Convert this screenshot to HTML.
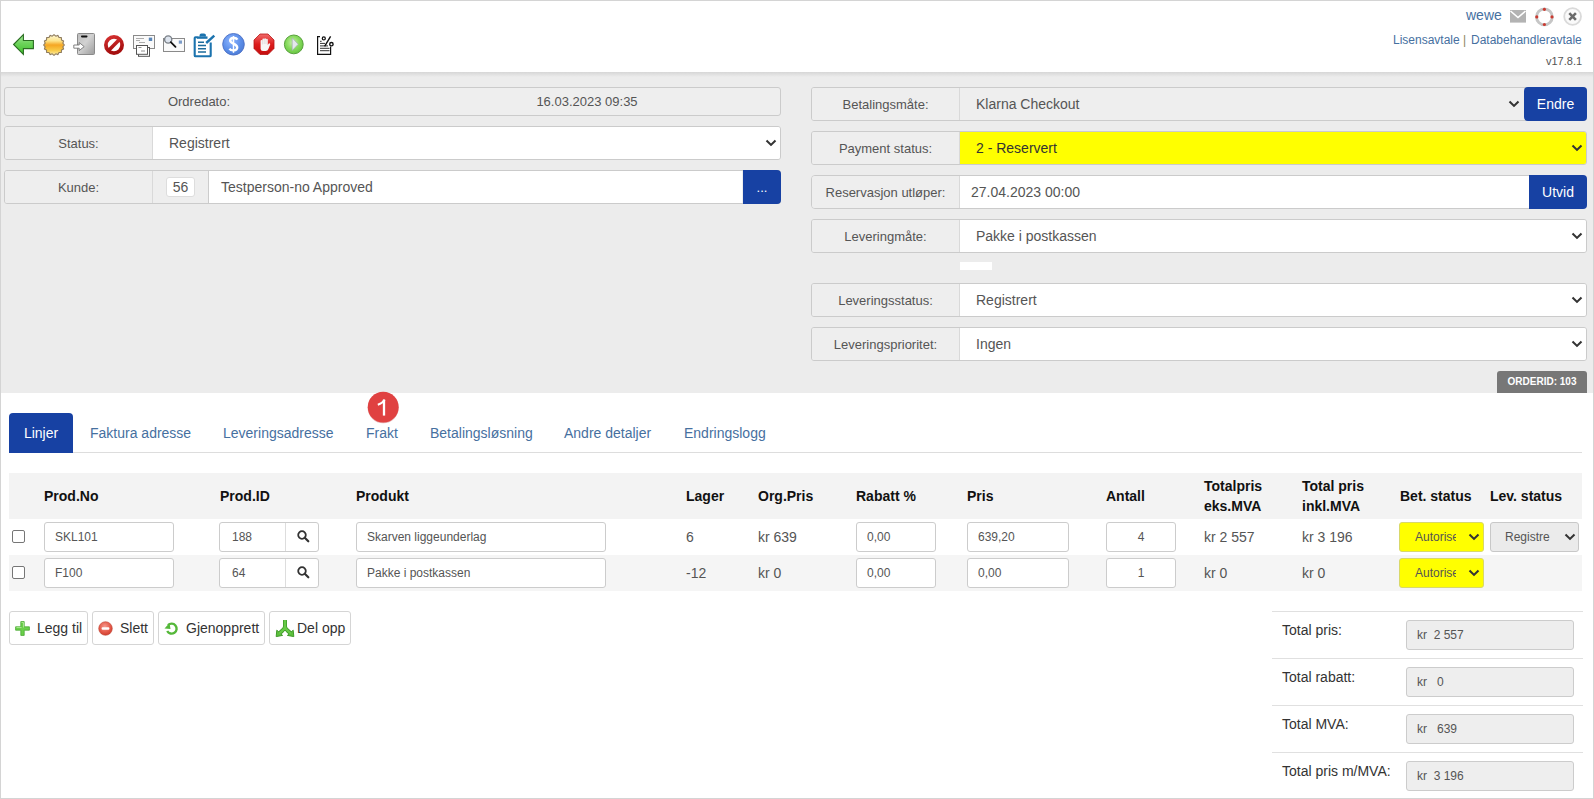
<!DOCTYPE html>
<html><head><meta charset="utf-8">
<style>
*{box-sizing:border-box;margin:0;padding:0}
html,body{width:1594px;height:799px;overflow:hidden;background:#fff}
body{font-family:"Liberation Sans",sans-serif;position:relative;color:#555}
.a{position:absolute}
#frame{left:0;top:0;width:1594px;height:799px;border:1px solid #d4d4d4;z-index:50;pointer-events:none}
#hdr{left:1px;top:1px;width:1592px;height:71px;background:#fff}
#grey{left:1px;top:72px;width:1592px;height:321px;background:#ececec}
#shadow{left:1px;top:72px;width:1592px;height:5px;background:linear-gradient(#d6d6d6,#ececec)}
.box{position:absolute;border:1px solid #cbcbcb;border-radius:3px;background:#eee;overflow:hidden}
.lbl{position:absolute;left:0;top:0;bottom:0;width:148px;background:#eee;border-right:1px solid #d9d9d9;font-size:13px;color:#555;text-align:center;padding-top:9px;line-height:16px}
.lt{font-size:13px;text-align:center;line-height:16px}
.val{position:absolute;top:0;bottom:0;right:0;background:#fff;font-size:14px;color:#555;line-height:32px}
.chev{position:absolute;width:7px;height:7px;border-right:2px solid #444;border-bottom:2px solid #444;transform:rotate(45deg)}
.btn{position:absolute;background:#1741a3;color:#fff;border-radius:4px;text-align:center}
.tab{top:425px;font-size:14px;line-height:16px;color:#46709f;white-space:nowrap}
.th{top:488px;font-size:14px;font-weight:bold;color:#111;line-height:16px;white-space:nowrap}
.th2{top:476px;font-size:14px;font-weight:bold;color:#111;line-height:20px;white-space:nowrap}
.inp{height:30px;background:#fff;border:1px solid #ccc;border-radius:3px;font-size:12px;line-height:28px;padding-left:10px;color:#555;white-space:nowrap;overflow:hidden}
.td{font-size:14px;line-height:30px;color:#555;white-space:nowrap}
.cb{width:13px;height:13px;border:1px solid #767676;border-radius:2px;background:#fff}
.ysel{width:85px;height:30px;background:#ffff00;border:1px solid #d8d86a;border-radius:3px;font-size:12px;line-height:28px;color:#555}
.gsel{width:89px;height:30px;background:#ebebeb;border:1px solid #c8c8c8;border-radius:3px;font-size:12px;line-height:28px;color:#555}
.sbtn{top:611px;height:34px;border:1px solid #d5d5d5;border-radius:3px;background:#fff;font-size:14px;line-height:32px;color:#333}
.tline{left:1272px;width:311px;height:1px;background:#e0e0e0}
.tlbl{left:1282px;font-size:14px;line-height:16px;color:#333}
.tinp{left:1406px;width:168px;height:30px;background:#eee;border:1px solid #ccc;border-radius:3px;font-size:12px;line-height:28px;padding-left:10px;color:#555;white-space:nowrap}
</style></head><body>
<div id="frame" class="a"></div>
<div id="hdr" class="a"></div>
<div id="grey" class="a"></div>
<div id="shadow" class="a"></div>

<!-- header icons -->
<svg class="a" style="left:0;top:0" width="345" height="70" viewBox="0 0 345 70">
 <defs>
  <linearGradient id="gArr" x1="0" y1="0" x2="0" y2="1"><stop offset="0" stop-color="#a6e89c"/><stop offset="0.45" stop-color="#6cd35a"/><stop offset="1" stop-color="#3fc12c"/></linearGradient>
  <linearGradient id="gSun" x1="0" y1="0" x2="0" y2="1"><stop offset="0" stop-color="#fff8d8"/><stop offset="0.3" stop-color="#fde48a"/><stop offset="0.5" stop-color="#f5a623"/><stop offset="0.75" stop-color="#f8c945"/><stop offset="1" stop-color="#fdf0b0"/></linearGradient>
  <linearGradient id="gDoor" x1="0" y1="0" x2="1" y2="1"><stop offset="0" stop-color="#bdbdbd"/><stop offset="0.45" stop-color="#d2d2d2"/><stop offset="1" stop-color="#9c9c9c"/></linearGradient>
  <radialGradient id="gDol" cx="0.4" cy="0.35" r="0.75"><stop offset="0" stop-color="#8fb6ff"/><stop offset="0.6" stop-color="#5a8de8"/><stop offset="1" stop-color="#4a78d0"/></radialGradient>
  <linearGradient id="gStop" x1="0" y1="0" x2="0" y2="1"><stop offset="0" stop-color="#f06a6a"/><stop offset="0.5" stop-color="#dd1c1c"/><stop offset="1" stop-color="#c40d0d"/></linearGradient>
  <radialGradient id="gPlay" cx="0.45" cy="0.4" r="0.7"><stop offset="0" stop-color="#c8f0a8"/><stop offset="0.5" stop-color="#86da5c"/><stop offset="1" stop-color="#5cbf3a"/></radialGradient>
  <linearGradient id="gNo" x1="0" y1="0" x2="0.3" y2="1" gradientUnits="objectBoundingBox"><stop offset="0" stop-color="#d43030"/><stop offset="1" stop-color="#a50f0f"/></linearGradient>
 </defs>
 <!-- arrow -->
 <path d="M13.6 44.5 L23.4 34.7 L23.4 40.5 L33.4 40.5 L33.4 48.6 L23.4 48.6 L23.4 54.3 Z" fill="url(#gArr)" stroke="#2b6d22" stroke-width="1.1" stroke-linejoin="miter"/>
 <!-- sun seal -->
 <path id="sunp" fill="url(#gSun)" stroke="#8f7c5e" stroke-width="1.1" stroke-linejoin="round" d="M54.00 34.60 L55.76 36.17 L57.98 35.39 L59.00 37.52 L61.35 37.65 L61.48 40.00 L63.61 41.02 L62.83 43.24 L64.40 45.00 L62.83 46.76 L63.61 48.98 L61.48 50.00 L61.35 52.35 L59.00 52.48 L57.98 54.61 L55.76 53.83 L54.00 55.40 L52.24 53.83 L50.02 54.61 L49.00 52.48 L46.65 52.35 L46.52 50.00 L44.39 48.98 L45.17 46.76 L43.60 45.00 L45.17 43.24 L44.39 41.02 L46.52 40.00 L46.65 37.65 L49.00 37.52 L50.02 35.39 L52.24 36.17 Z"/>
 <!-- door -->
 <rect x="77.5" y="33.5" width="17" height="21" rx="1" fill="url(#gDoor)" stroke="#8a8a8a" stroke-width="1"/>
 <rect x="81" y="35.6" width="6.5" height="1.8" rx="0.8" fill="#111"/>
 <path d="M73.8 45 L79.2 45 L79.2 42.6 L84.2 46.6 L79.2 50.6 L79.2 48.2 L73.8 48.2 Z" fill="#fff" stroke="#666" stroke-width="0.8"/>
 <!-- no sign -->
 <circle cx="114" cy="45" r="8.1" fill="none" stroke="url(#gNo)" stroke-width="3.8"/>
 <path d="M108.3 50.7 L119.7 39.3" stroke="url(#gNo)" stroke-width="3.6"/>
 <!-- mail docs -->
 <rect x="133.5" y="35.5" width="21" height="13" fill="#fafafa" stroke="#8a8a8a" stroke-width="1"/>
 <rect x="148.8" y="37.6" width="3.4" height="3.4" fill="#5a86b8"/>
 <path d="M136 38.5 h8 M136 40.5 h4 M139 42.5 h6" stroke="#999" stroke-width="0.8"/>
 <rect x="138.5" y="47.5" width="11" height="8.8" fill="#fff" stroke="#555" stroke-width="1"/>
 <rect x="136.5" y="45.5" width="11" height="8.8" fill="#fff" stroke="#555" stroke-width="1"/>
 <path d="M138.5 47.5 h3 M141 51 h4" stroke="#777" stroke-width="0.8"/>
 <!-- magnifier mail -->
 <rect x="163.5" y="38.5" width="21" height="13" fill="#fafafa" stroke="#8a8a8a" stroke-width="1"/>
 <rect x="178.8" y="40.5" width="3.2" height="3.2" fill="#7c9cc8"/>
 <circle cx="168.2" cy="39.5" r="3.6" fill="#dde4ee" stroke="#7a8088" stroke-width="1.4"/>
 <path d="M170.8 42.2 L175.5 46.8" stroke="#111" stroke-width="1.8" stroke-linecap="round"/>
  <!-- clipboard -->
 <path d="M197.5 37.2 h-2 a0.8 0.8 0 0 0 -0.8 0.8 v17.4 a0.8 0.8 0 0 0 0.8 0.8 h14.4 a0.8 0.8 0 0 0 0.8 -0.8 v-13" fill="none" stroke="#1b73ae" stroke-width="2.1"/>
 <path d="M197 37.6 h10.5" fill="none" stroke="#1b73ae" stroke-width="2.4"/>
 <path d="M200.2 36.6 v-1.2 a1.2 1.2 0 0 1 1.2 -1.2 h2.6 a1.2 1.2 0 0 1 1.2 1.2 v1.2" fill="#1b73ae" stroke="#1b73ae" stroke-width="1.4"/>
 <path d="M198 42.3 h6 M198 45.6 h8 M198 48.8 h8 M198 52.1 h8" stroke="#1d6c9c" stroke-width="1.5"/>
 <path d="M206.2 43 L214.3 35.6" stroke="#1b73ae" stroke-width="2.4"/>
 <!-- dollar -->
 <circle cx="233.5" cy="44.3" r="10.8" fill="url(#gDol)" stroke="#4c6fc4" stroke-width="0.9"/>
 <path d="M237.4 39.6 C236.2 37.4 230 37.2 230.2 40.8 C230.4 43.8 237.2 43.6 237.2 47.5 C237.2 51 231 51.2 229.5 48.6" fill="none" stroke="#fff" stroke-width="2.4"/>
 <path d="M233.5 36 V52.8" stroke="#fff" stroke-width="1.5"/>
 <!-- stop -->
 <path d="M260 34 L268 34 L274 40 L274 48.5 L268 54.5 L260 54.5 L254 48.5 L254 40 Z" fill="url(#gStop)" stroke="#b81616" stroke-width="0.8"/>
 <path d="M260.6 41 a0.9 0.9 0 0 1 1.8 0 v-1.6 a0.9 0.9 0 0 1 1.8 0 v-0.3 a0.9 0.9 0 0 1 1.8 0 v0.6 a0.9 0.9 0 0 1 1.8 0 v5.2 l0.9 -1.3 a0.9 0.9 0 0 1 1.5 0.9 l-1.8 4.6 a3 3 0 0 1 -2.8 2 h-2.6 a2.4 2.4 0 0 1 -2.4 -2.4 Z" fill="#f8f6f6"/>
 <path d="M262.4 41 v3.4 M264.2 39.4 v4.6 M266 39.6 v4.4" stroke="#cfc6c6" stroke-width="0.5"/>
 <!-- play -->
 <circle cx="293.8" cy="44.4" r="9.4" fill="url(#gPlay)" stroke="#58a03c" stroke-width="1"/>
 <path d="M292.2 37.8 L298.2 44.3 L292.2 50.6 Z" fill="#e4e8ec" stroke="#9aa4ae" stroke-width="0.6"/>
 <!-- percent doc -->
 <path d="M320 36.6 h-2.4 v17.8 h13 v-8" fill="none" stroke="#111" stroke-width="1.2"/>
 <path d="M320 41.3 h1.6 M320 43.4 h5 M320 45.9 h8 M320 48.3 h9.5 M320 50.7 h9.5" stroke="#1a1a1a" stroke-width="0.9"/>
 <circle cx="323.8" cy="38.4" r="1.5" fill="none" stroke="#111" stroke-width="1.3"/>
 <circle cx="331.4" cy="44.2" r="1.7" fill="#fff" stroke="#111" stroke-width="1.4"/>
 <path d="M330.6 36.3 L324.6 46.3" stroke="#111" stroke-width="1.4"/>
</svg>

<!-- top right -->
<div class="a" style="left:1466px;top:7px;font-size:14px;line-height:16px;color:#46709f">wewe</div>
<svg class="a" style="left:1505px;top:5px" width="80" height="24" viewBox="1505 5 80 24">
 <rect x="1510" y="10" width="16" height="12.6" fill="#b3b3b3"/>
 <path d="M1510.5 11 L1518 17.5 L1525.5 11" fill="none" stroke="#fff" stroke-width="1.6"/>
 <circle cx="1544.4" cy="16.9" r="7.9" fill="none" stroke="#c6c6c6" stroke-width="2.8"/>
 <circle cx="1544.4" cy="9.3" r="1.6" fill="#c93a30"/><circle cx="1544.4" cy="24.5" r="1.6" fill="#c93a30"/>
 <circle cx="1536.8" cy="16.9" r="1.6" fill="#c93a30"/><circle cx="1552" cy="16.9" r="1.6" fill="#c93a30"/>
 <circle cx="1572.6" cy="16.5" r="8.4" fill="#fafafa" stroke="#dadada" stroke-width="1.8"/>
 <path d="M1569.3 13.2 L1575.9 19.8 M1575.9 13.2 L1569.3 19.8" stroke="#6a6a6a" stroke-width="2.6"/>
</svg>
<div class="a" style="left:1393px;top:33px;font-size:12px;line-height:14px;color:#46709f;white-space:nowrap">Lisensavtale <span style="color:#8a8660">|</span> <span style="margin-left:1.5px">Databehandleravtale</span></div>
<div class="a" style="left:1546px;top:55px;font-size:11px;line-height:12px;color:#555">v17.8.1</div>

<!-- left column -->
<div class="box" style="left:4px;top:87px;width:777px;height:29px">
  <div class="a lt" style="left:0;width:388px;top:6px">Ordredato:</div>
  <div class="a lt" style="left:388px;width:388px;top:6px">16.03.2023 09:35</div>
</div>
<div class="box" style="left:4px;top:126px;width:777px;height:34px">
  <div class="lbl">Status:</div>
  <div class="val" style="left:148px;padding-left:16px">Registrert<svg class="a" style="right:3px;top:12px" width="12" height="8" viewBox="0 0 12 8"><path d="M1.5 1.5 L6 5.9 L10.5 1.5" fill="none" stroke="#333" stroke-width="2.1"/></svg></div>
</div>
<div class="box" style="left:4px;top:170px;width:777px;height:34px">
  <div class="lbl">Kunde:</div>
  <div class="a" style="left:148px;top:0;width:56px;bottom:0;background:#eee;border-right:1px solid #ccc">
    <div class="a" style="left:13px;top:6px;width:29px;height:20px;background:#fff;border:1px solid #ddd;border-radius:3px;font-size:14px;line-height:18px;text-align:center;color:#555">56</div>
  </div>
  <div class="val" style="left:204px;right:38px;padding-left:12px">Testperson-no Approved</div>
  </div>
<div class="btn" style="left:743px;top:170px;width:38px;height:34px;border-radius:0 4px 4px 0;font-size:13px;line-height:36px">...</div>

<!-- right column -->
<div class="box" style="left:811px;top:87px;width:776px;height:34px">
  <div class="lbl">Betalingsmåte:</div>
  <div class="val" style="left:148px;right:63px;background:#eee;padding-left:16px">Klarna Checkout<svg class="a" style="right:3px;top:12px" width="12" height="8" viewBox="0 0 12 8"><path d="M1.5 1.5 L6 5.9 L10.5 1.5" fill="none" stroke="#333" stroke-width="2.1"/></svg></div>
</div>
<div class="btn" style="left:1524px;top:87px;width:63px;height:34px;font-size:14px;line-height:34px">Endre</div>
<div class="box" style="left:811px;top:131px;width:776px;height:34px">
  <div class="lbl">Payment status:</div>
  <div class="val" style="left:148px;background:#ffff00;padding-left:16px;color:#333">2 - Reservert<svg class="a" style="right:3px;top:12px" width="12" height="8" viewBox="0 0 12 8"><path d="M1.5 1.5 L6 5.9 L10.5 1.5" fill="none" stroke="#333" stroke-width="2.1"/></svg></div>
</div>
<div class="box" style="left:811px;top:175px;width:719px;height:34px;border-radius:4px 0 0 4px">
  <div class="lbl">Reservasjon utløper:</div>
  <div class="val" style="left:148px;padding-left:11px">27.04.2023 00:00</div>
</div>
<div class="btn" style="left:1529px;top:175px;width:58px;height:34px;border-radius:0 4px 4px 0;font-size:14px;line-height:34px">Utvid</div>
<div class="box" style="left:811px;top:219px;width:776px;height:34px">
  <div class="lbl">Leveringmåte:</div>
  <div class="val" style="left:148px;padding-left:16px">Pakke i postkassen<svg class="a" style="right:3px;top:12px" width="12" height="8" viewBox="0 0 12 8"><path d="M1.5 1.5 L6 5.9 L10.5 1.5" fill="none" stroke="#333" stroke-width="2.1"/></svg></div>
</div>
<div class="a" style="left:960px;top:262px;width:32px;height:8px;background:#fff"></div>
<div class="box" style="left:811px;top:283px;width:776px;height:34px">
  <div class="lbl">Leveringsstatus:</div>
  <div class="val" style="left:148px;padding-left:16px">Registrert<svg class="a" style="right:3px;top:12px" width="12" height="8" viewBox="0 0 12 8"><path d="M1.5 1.5 L6 5.9 L10.5 1.5" fill="none" stroke="#333" stroke-width="2.1"/></svg></div>
</div>
<div class="box" style="left:811px;top:327px;width:776px;height:34px">
  <div class="lbl">Leveringsprioritet:</div>
  <div class="val" style="left:148px;padding-left:16px">Ingen<svg class="a" style="right:3px;top:12px" width="12" height="8" viewBox="0 0 12 8"><path d="M1.5 1.5 L6 5.9 L10.5 1.5" fill="none" stroke="#333" stroke-width="2.1"/></svg></div>
</div>
<div class="a" style="left:1497px;top:371px;width:90px;height:22px;background:#777;color:#fff;font-weight:bold;font-size:10px;line-height:21px;text-align:center;border-radius:3px 3px 0 0">ORDERID: 103</div>

<!-- tabs -->
<div class="a" style="left:9px;top:452px;width:1573px;height:1px;background:#ddd"></div>
<div class="a" style="left:9px;top:413px;width:64px;height:40px;background:#1741a3;border-radius:4px 4px 0 0;color:#fff;font-size:14px;line-height:40px;text-align:center">Linjer</div>
<div class="a tab" style="left:90px">Faktura adresse</div>
<div class="a tab" style="left:223px">Leveringsadresse</div>
<div class="a tab" style="left:366px">Frakt</div>
<div class="a tab" style="left:430px">Betalingsløsning</div>
<div class="a tab" style="left:564px">Andre detaljer</div>
<div class="a tab" style="left:684px">Endringslogg</div>
<svg class="a" style="left:367px;top:390px" width="33" height="35" viewBox="367 390 33 35"><circle cx="383.2" cy="407.6" r="15.6" fill="#b83030" opacity="0.35"/><circle cx="383.2" cy="407.2" r="15.4" fill="#e04141"/><path d="M384 399.6 V415.6" stroke="#fff" stroke-width="2.3"/><path d="M384.6 399.8 C383 402.6 380.5 404 377.8 404.8" fill="none" stroke="#fff" stroke-width="2"/></svg>

<!-- table -->
<div class="a" style="left:9px;top:473px;width:1573px;height:46px;background:#f3f3f3"></div>
<div class="a" style="left:9px;top:555px;width:1573px;height:36px;background:#f5f5f5"></div>
<div class="a th" style="left:44px">Prod.No</div>
<div class="a th" style="left:220px">Prod.ID</div>
<div class="a th" style="left:356px">Produkt</div>
<div class="a th" style="left:686px">Lager</div>
<div class="a th" style="left:758px">Org.Pris</div>
<div class="a th" style="left:856px">Rabatt %</div>
<div class="a th" style="left:967px">Pris</div>
<div class="a th" style="left:1106px">Antall</div>
<div class="a th2" style="left:1204px">Totalpris<br>eks.MVA</div>
<div class="a th2" style="left:1302px">Total pris<br>inkl.MVA</div>
<div class="a th" style="left:1400px">Bet. status</div>
<div class="a th" style="left:1490px">Lev. status</div>

<div class="a cb" style="left:12px;top:530px"></div>
<div class="a inp" style="left:44px;top:522px;width:130px;">SKL101</div>
<div class="a inp" style="left:219px;top:522px;width:100px;padding-left:0;border-radius:3px"><span class="a" style="left:12px">188</span><div class="a" style="left:65px;top:0;bottom:0;width:1px;background:#ddd"></div><svg class="a" style="left:76.5px;top:7px" width="13" height="13" viewBox="0 0 13 13"><circle cx="5" cy="5" r="3.8" fill="none" stroke="#333" stroke-width="1.8"/><path d="M7.8 7.8 L11.3 11.3" stroke="#333" stroke-width="2.2" stroke-linecap="round"/></svg></div>
<div class="a inp" style="left:356px;top:522px;width:250px;">Skarven liggeunderlag</div>
<div class="a td" style="left:686px;top:522px">6</div>
<div class="a td" style="left:758px;top:522px">kr 639</div>
<div class="a inp" style="left:856px;top:522px;width:80px;">0,00</div>
<div class="a inp" style="left:967px;top:522px;width:102px;">639,20</div>
<div class="a inp" style="left:1106px;top:522px;width:70px;text-align:center;padding-left:0">4</div>
<div class="a td" style="left:1204px;top:522px">kr 2 557</div>
<div class="a td" style="left:1302px;top:522px">kr 3 196</div>
<div class="a ysel" style="left:1399px;top:522px"><span class="a" style="left:15px;width:41px;overflow:hidden;white-space:nowrap">Autorisert</span><svg class="a" style="left:68px;top:10px" width="12" height="8" viewBox="0 0 12 8"><path d="M1.5 1.5 L6 5.9 L10.5 1.5" fill="none" stroke="#333" stroke-width="2.1"/></svg></div>
<div class="a gsel" style="left:1490px;top:522px"><span class="a" style="left:14px">Registre</span><svg class="a" style="left:73px;top:10px" width="12" height="8" viewBox="0 0 12 8"><path d="M1.5 1.5 L6 5.9 L10.5 1.5" fill="none" stroke="#333" stroke-width="2.1"/></svg></div>
<div class="a cb" style="left:12px;top:566px"></div>
<div class="a inp" style="left:44px;top:558px;width:130px;">F100</div>
<div class="a inp" style="left:219px;top:558px;width:100px;padding-left:0;border-radius:3px"><span class="a" style="left:12px">64</span><div class="a" style="left:65px;top:0;bottom:0;width:1px;background:#ddd"></div><svg class="a" style="left:76.5px;top:7px" width="13" height="13" viewBox="0 0 13 13"><circle cx="5" cy="5" r="3.8" fill="none" stroke="#333" stroke-width="1.8"/><path d="M7.8 7.8 L11.3 11.3" stroke="#333" stroke-width="2.2" stroke-linecap="round"/></svg></div>
<div class="a inp" style="left:356px;top:558px;width:250px;">Pakke i postkassen</div>
<div class="a td" style="left:686px;top:558px">-12</div>
<div class="a td" style="left:758px;top:558px">kr 0</div>
<div class="a inp" style="left:856px;top:558px;width:80px;">0,00</div>
<div class="a inp" style="left:967px;top:558px;width:102px;">0,00</div>
<div class="a inp" style="left:1106px;top:558px;width:70px;text-align:center;padding-left:0">1</div>
<div class="a td" style="left:1204px;top:558px">kr 0</div>
<div class="a td" style="left:1302px;top:558px">kr 0</div>
<div class="a ysel" style="left:1399px;top:558px"><span class="a" style="left:15px;width:41px;overflow:hidden;white-space:nowrap">Autorisert</span><svg class="a" style="left:68px;top:10px" width="12" height="8" viewBox="0 0 12 8"><path d="M1.5 1.5 L6 5.9 L10.5 1.5" fill="none" stroke="#333" stroke-width="2.1"/></svg></div>


<!-- buttons -->
<div class="a sbtn" style="left:9px;width:79px"><svg class="a" style="left:5px;top:9px" width="15" height="15" viewBox="0 0 15 15"><path d="M5.8 0.6 h3.4 v5.2 h5.2 v3.4 h-5.2 v5.2 h-3.4 v-5.2 h-5.2 v-3.4 h5.2 Z" fill="#6ad04a" stroke="#4aa834" stroke-width="0.8"/><path d="M6.5 1.5 h2 v5 M1.5 6.5 h5" fill="none" stroke="#b8eca0" stroke-width="0.8"/></svg><span style="left:27px" class="a">Legg til</span></div>
<div class="a sbtn" style="left:92px;width:62px"><svg class="a" style="left:5px;top:9px" width="15" height="15" viewBox="0 0 15 15"><defs><radialGradient id="gSl" cx="0.45" cy="0.35" r="0.7"><stop offset="0" stop-color="#f59a8e"/><stop offset="0.6" stop-color="#e45848"/><stop offset="1" stop-color="#cc3a2c"/></radialGradient></defs><circle cx="7.5" cy="7.5" r="6.8" fill="url(#gSl)" stroke="#c04434" stroke-width="0.6"/><rect x="3.6" y="6.3" width="7.8" height="2.4" rx="1" fill="#fff"/></svg><span style="left:27px" class="a">Slett</span></div>
<div class="a sbtn" style="left:158px;width:107px"><svg class="a" style="left:5px;top:9px" width="15" height="15" viewBox="0 0 15 15"><path d="M4 4.2 A5 5 0 1 1 3.2 10" fill="none" stroke="#55b83a" stroke-width="2.4"/><path d="M0.5 7.5 L5.5 2 L6.5 8 Z" fill="#55b83a"/></svg><span style="left:27px" class="a">Gjenopprett</span></div>
<div class="a sbtn" style="left:269px;width:82px"><svg class="a" style="left:5px;top:8px" width="20" height="18" viewBox="0 0 20 18"><path d="M10 1 V6.5 C10 9.5 7 10.5 5 12.8 M10 6.5 C10 9.5 13 10.5 15 12.8" fill="none" stroke="#3f9a2a" stroke-width="4" stroke-linecap="round"/><path d="M1.2 16.6 L1.8 10.2 L7.6 15.4 Z M18.8 16.6 L18.2 10.2 L12.4 15.4 Z" fill="#5cbf3c" stroke="#3f9a2a" stroke-width="1" stroke-linejoin="round"/><path d="M10 1 V6.5 C10 9.5 7 10.5 5 12.8 M10 6.5 C10 9.5 13 10.5 15 12.8" fill="none" stroke="#66c946" stroke-width="2.4" stroke-linecap="round"/></svg><span style="left:27px" class="a">Del opp</span></div>

<!-- totals -->
<div class="a tline" style="top:611px"></div>
<div class="a tline" style="top:658px"></div>
<div class="a tline" style="top:705px"></div>
<div class="a tline" style="top:752px"></div>
<div class="a tlbl" style="top:622px">Total pris:</div>
<div class="a tlbl" style="top:669px">Total rabatt:</div>
<div class="a tlbl" style="top:716px">Total MVA:</div>
<div class="a tlbl" style="top:763px">Total pris m/MVA:</div>
<div class="a tinp" style="top:620px">kr&nbsp; 2 557</div>
<div class="a tinp" style="top:667px">kr&nbsp;&nbsp; 0</div>
<div class="a tinp" style="top:714px">kr&nbsp;&nbsp; 639</div>
<div class="a tinp" style="top:761px">kr&nbsp; 3 196</div>
</body></html>
